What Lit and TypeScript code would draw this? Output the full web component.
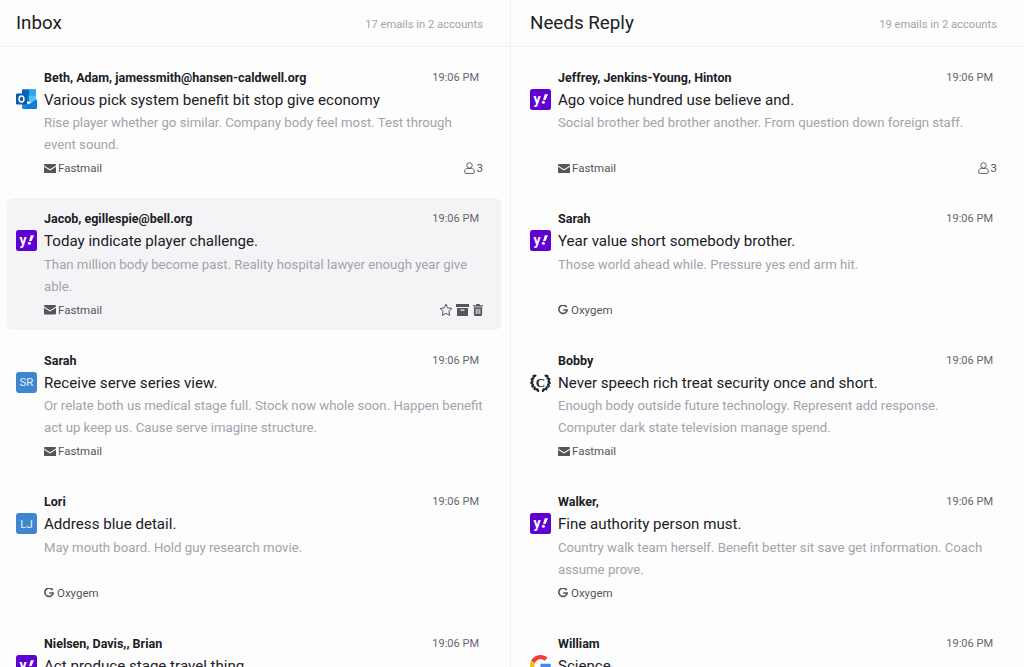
import { LitElement, html, css, svg } from "lit";
import { customElement } from "lit/decorators.js";

type Mail = {
  sender: string;
  title: string;
  preview: string;
  avatar: string;
  initials?: string;
  account: "Fastmail" | "Oxygem";
  people?: number;
  hover?: boolean;
};

const inbox: Mail[] = [
  {
    sender: "Beth, Adam, jamessmith@hansen-caldwell.org",
    title: "Various pick system benefit bit stop give economy",
    preview: "Rise player whether go similar. Company body feel most. Test through event sound.",
    avatar: "outlook",
    account: "Fastmail",
    people: 3,
  },
  {
    sender: "Jacob, egillespie@bell.org",
    title: "Today indicate player challenge.",
    preview: "Than million body become past. Reality hospital lawyer enough year give able.",
    avatar: "yahoo",
    account: "Fastmail",
    hover: true,
  },
  {
    sender: "Sarah",
    title: "Receive serve series view.",
    preview: "Or relate both us medical stage full. Stock now whole soon. Happen benefit act up keep us. Cause serve imagine structure.",
    avatar: "initials",
    initials: "SR",
    account: "Fastmail",
  },
  {
    sender: "Lori",
    title: "Address blue detail.",
    preview: "May mouth board. Hold guy research movie.",
    avatar: "initials",
    initials: "LJ",
    account: "Oxygem",
  },
  {
    sender: "Nielsen, Davis,, Brian",
    title: "Act produce stage travel thing.",
    preview: "",
    avatar: "yahoo",
    account: "Fastmail",
  },
];

const needsReply: Mail[] = [
  {
    sender: "Jeffrey, Jenkins-Young, Hinton",
    title: "Ago voice hundred use believe and.",
    preview: "Social brother bed brother another. From question down foreign staff.",
    avatar: "yahoo",
    account: "Fastmail",
    people: 3,
  },
  {
    sender: "Sarah",
    title: "Year value short somebody brother.",
    preview: "Those world ahead while. Pressure yes end arm hit.",
    avatar: "yahoo",
    account: "Oxygem",
  },
  {
    sender: "Bobby",
    title: "Never speech rich treat security once and short.",
    preview: "Enough body outside future technology. Represent add response. Computer dark state television manage spend.",
    avatar: "laurel",
    account: "Fastmail",
  },
  {
    sender: "Walker,",
    title: "Fine authority person must.",
    preview: "Country walk team herself. Benefit better sit save get information. Coach assume prove.",
    avatar: "yahoo",
    account: "Oxygem",
  },
  {
    sender: "William",
    title: "Science",
    preview: "",
    avatar: "google",
    account: "Fastmail",
  },
];

const outlookIcon = html`<svg viewBox="0 0 21 21" width="21" height="21">
  <rect x="6" y="0.500" width="14" height="12" rx="1" fill="#0f78d4"></rect>
  <rect x="6" y="0.500" width="7" height="6" fill="#0364b8"></rect>
  <rect x="13" y="0.500" width="7" height="6" fill="#28a8ea"></rect>
  <rect x="13" y="6.500" width="7" height="6" fill="#50c4f0"></rect>
  <path d="M6 11l7 4.500 8-5v8a1.500 1.500 0 0 1-1.500 1.500H7.500A1.500 1.500 0 0 1 6 18.500z" fill="#1490df"></path>
  <path d="M7 20l8-6.500 6-3v8a1.500 1.500 0 0 1-1.500 1.500z" fill="#0f78d4" opacity=".8"></path>
  <rect x="0" y="4.500" width="11" height="11" rx="1.200" fill="#0a5cad"></rect>
  <ellipse cx="5.500" cy="10" rx="2.400" ry="3" fill="none" stroke="#fff" stroke-width="1.500"></ellipse>
</svg>`;

const yahooIcon = html`<svg viewBox="0 0 21 21" width="21" height="21">
  <rect width="21" height="21" rx="2.500" fill="#5f01d1"></rect>
  <text x="3.500" y="14.500" class="yh">y</text>
  <path d="M14.800 5.300h3.200l-2.400 5.800h-2.500z" fill="#fff"></path>
  <circle cx="13.400" cy="13.300" r="1.500" fill="#fff"></circle>
</svg>`;

// wreath: leaves running up both sides of the C
const leaves = [0, 1, 2, 3, 4, 5].map((i) => {
  const deg = 135 + i * 23;
  const a = (deg * Math.PI) / 180;
  const x = 10.5 + Math.cos(a) * 8.6;
  const y = 10 - Math.sin(a) * 8.6;
  const r = 90 - deg + 35;
  return svg`
    <ellipse cx=${x} cy=${y} rx="2.200" ry="1.300" transform="rotate(${r} ${x} ${y})" fill="#1d2430"></ellipse>
    <ellipse cx=${21 - x} cy=${y} rx="2.200" ry="1.300" transform="rotate(${-r} ${21 - x} ${y})" fill="#1d2430"></ellipse>`;
});

const laurelIcon = html`<svg viewBox="0 0 21 21" width="21" height="21">
  ${leaves}
  <text x="10.500" y="14.500" text-anchor="middle" class="lc">C</text>
</svg>`;

const googleIcon = html`<svg viewBox="0 0 48 48" width="21" height="21">
  <path fill="#ea4335" d="M24 9.500c3.500 0 6.700 1.300 9.200 3.400l6.900-6.900C35.900 2.300 30.300 0 24 0 14.600 0 6.500 5.400 2.600 13.200l8 6.200C12.500 13.600 17.800 9.500 24 9.500z"></path>
  <path fill="#4285f4" d="M47.500 24.500c0-1.600-.2-3.200-.4-4.500H24v9h13.200c-.6 3-2.300 5.500-4.800 7.200l7.700 6c4.500-4.200 7.400-10.300 7.400-17.700z"></path>
  <path fill="#fbbc05" d="M10.600 28.600c-.5-1.400-.8-3-.8-4.600s.3-3.200.8-4.600l-8-6.200C.9 16.500 0 20.100 0 24s.9 7.500 2.600 10.800z"></path>
  <path fill="#34a853" d="M24 48c6.500 0 11.900-2.100 15.900-5.800l-7.700-6c-2.100 1.400-4.900 2.300-8.200 2.300-6.200 0-11.500-4.100-13.400-9.900l-8 6.200C6.500 42.600 14.600 48 24 48z"></path>
</svg>`;

const mailIcon = html`<svg viewBox="0 0 12 9.500" width="12" height="9.500" class="acct-icon">
  <path d="M.9 0h10.200c.5 0 .9.400.9.900v.6L6 5.200 0 1.500V.9C0 .4.400 0 .9 0z"></path>
  <path d="M0 2.700l6 3.700 6-3.700v5.900c0 .5-.4.900-.9.900H.9C.4 9.500 0 9.100 0 8.600z"></path>
</svg>`;

const gIcon = html`<svg viewBox="0 0 10 10" width="10" height="10" class="acct-icon g">
  <path d="M8.700 2.200A4.200 4.200 0 1 0 9.200 5H5.200" fill="none" stroke="currentColor" stroke-width="1.600"></path>
</svg>`;

const userIcon = html`<svg viewBox="0 0 12 13" width="11" height="12" class="line-icon">
  <circle cx="6" cy="3.700" r="3"></circle>
  <path d="M3.600 7h4.800c1.500 0 2.800 1.200 2.800 2.700v1.500c0 .7-.5 1.200-1.200 1.200H2c-.7 0-1.200-.5-1.200-1.200V9.700C.8 8.200 2.100 7 3.600 7z"></path>
</svg>`;

const starIcon = html`<svg viewBox="0 0 14 14" width="14" height="14" class="line-icon">
  <path d="M7 1.200l1.800 3.700 4 .6-2.900 2.800.7 4L7 10.400l-3.600 1.900.7-4L1.200 5.500l4-.6z"></path>
</svg>`;

const archiveIcon = html`<svg viewBox="0 0 13 12" width="13" height="12" class="solid-icon box">
  <path d="M0 0h13v3H0z"></path>
  <path d="M1 4h11v7.200c0 .4-.4.800-.8.800H1.800c-.4 0-.8-.4-.8-.800zM4.500 5.500v1.300h4V5.500z" fill-rule="evenodd"></path>
</svg>`;

const trashIcon = html`<svg viewBox="0 0 11 13" width="10" height="12" class="solid-icon">
  <path d="M3.800 0h3.400l.6 1.200H11v1.400H0V1.200h3.200z"></path>
  <path d="M1 3.500h9v8.300c0 .7-.5 1.200-1.200 1.200H2.200C1.500 13 1 12.500 1 11.800zM3 5v6h1V5zm2 0v6h1V5zm2 0v6h1V5z" fill-rule="evenodd"></path>
</svg>`;

@customElement("app-root")
export class AppRoot extends LitElement {
  static styles = css`
    :host {
      display: block;
      height: 667px;
      overflow: hidden;
      background: #fdfdfe;
      font-family: Roboto, "Liberation Sans", sans-serif;
      color: #202024;
    }
    .columns {
      display: grid;
      grid-template-columns: 511px 510px;
      column-gap: 3px;
    }
    .column {
      min-width: 0;
    }
    .column:first-child {
      border-right: 1px solid #f0f0f3;
    }
    .head {
      height: 46px;
      display: flex;
      align-items: center;
      justify-content: space-between;
      padding: 0 27px 0 16px;
      border-bottom: 1px solid #f0f0f3;
    }
    .head h2 {
      margin: 0 0 1px;
      font-size: 18.8px;
      font-weight: 400;
    }
    .count {
      font-size: 11.2px;
      color: #a3a3aa;
      margin-top: 2px;
    }
    .list {
      display: flex;
      flex-direction: column;
      gap: 9.5px;
      padding: 9.5px 9px 0 7px;
    }
    .card {
      height: 132px;
      box-sizing: border-box;
      padding: 10px 18px 8px 9px;
      border-radius: 6px;
      display: grid;
      grid-template-columns: 21px 1fr auto;
      grid-template-rows: 22px 23.5px 44px 24.5px;
      column-gap: 7px;
    }
    .card.hover {
      background: #f4f4f7;
    }
    .avatar {
      grid-column: 1;
      grid-row: 2;
      width: 21px;
      height: 21px;
      display: flex;
    }
    .initials {
      border-radius: 3px;
      background: #3e87cf;
      color: #e4eef8;
      font-size: 11.5px;
      align-items: center;
      justify-content: center;
    }
    .yh {
      font: 700 14px Roboto, sans-serif;
      fill: #fff;
    }
    .lc {
      font: 700 13px "Liberation Serif", serif;
      fill: #1d2430;
    }
    .sender {
      grid-column: 2;
      grid-row: 1;
      font-size: 12.5px;
      font-weight: 700;
      line-height: 21px;
      white-space: nowrap;
    }
    .time {
      grid-column: 3;
      grid-row: 1;
      font-size: 11px;
      line-height: 21px;
      color: #66666c;
      margin-right: 4px;
    }
    .title {
      grid-column: 2 / 4;
      grid-row: 2;
      font-size: 15.1px;
      line-height: 23px;
      white-space: nowrap;
    }
    .preview {
      grid-column: 2 / 4;
      grid-row: 3;
      font-size: 13.2px;
      line-height: 22px;
      color: #a3a3aa;
    }
    .foot {
      grid-column: 2 / 4;
      grid-row: 4;
      display: flex;
      align-items: center;
      justify-content: space-between;
      font-size: 11.5px;
      color: #55555b;
    }
    .account,
    .meta {
      display: flex;
      align-items: center;
    }
    .account {
      gap: 2px;
    }
    .acct-icon {
      fill: #55555b;
      color: #55555b;
    }
    .acct-icon.g {
      margin-right: 1px;
    }
    .meta {
      gap: 2px;
    }
    .actions {
      gap: 3px;
    }
    .line-icon {
      fill: none;
      stroke: #55555b;
      stroke-width: 1;
    }
    .solid-icon {
      fill: #55555b;
    }
    .box {
      margin-right: 1px;
    }
  `;

  private renderAvatar(m: Mail) {
    if (m.avatar === "initials") return html`<div class="avatar initials">${m.initials}</div>`;
    const icon =
      m.avatar === "outlook"
        ? outlookIcon
        : m.avatar === "laurel"
          ? laurelIcon
          : m.avatar === "google"
            ? googleIcon
            : yahooIcon;
    return html`<div class="avatar">${icon}</div>`;
  }

  private renderMail(m: Mail) {
    return html`
      <div class="card ${m.hover ? "hover" : ""}">
        ${this.renderAvatar(m)}
        <div class="sender">${m.sender}</div>
        <div class="time">19:06 PM</div>
        <div class="title">${m.title}</div>
        <div class="preview">${m.preview}</div>
        <div class="foot">
          <div class="account">
            ${m.account === "Fastmail" ? mailIcon : gIcon}
            <span>${m.account}</span>
          </div>
          ${m.hover
            ? html`<div class="meta actions">${starIcon}${archiveIcon}${trashIcon}</div>`
            : m.people
              ? html`<div class="meta">${userIcon}<span>${m.people}</span></div>`
              : ""}
        </div>
      </div>
    `;
  }

  private renderColumn(name: string, count: string, mails: Mail[]) {
    return html`
      <section class="column">
        <header class="head">
          <h2>${name}</h2>
          <span class="count">${count}</span>
        </header>
        <div class="list">${mails.map((m) => this.renderMail(m))}</div>
      </section>
    `;
  }

  render() {
    return html`
      <div class="columns">
        ${this.renderColumn("Inbox", "17 emails in 2 accounts", inbox)}
        ${this.renderColumn("Needs Reply", "19 emails in 2 accounts", needsReply)}
      </div>
    `;
  }
}
